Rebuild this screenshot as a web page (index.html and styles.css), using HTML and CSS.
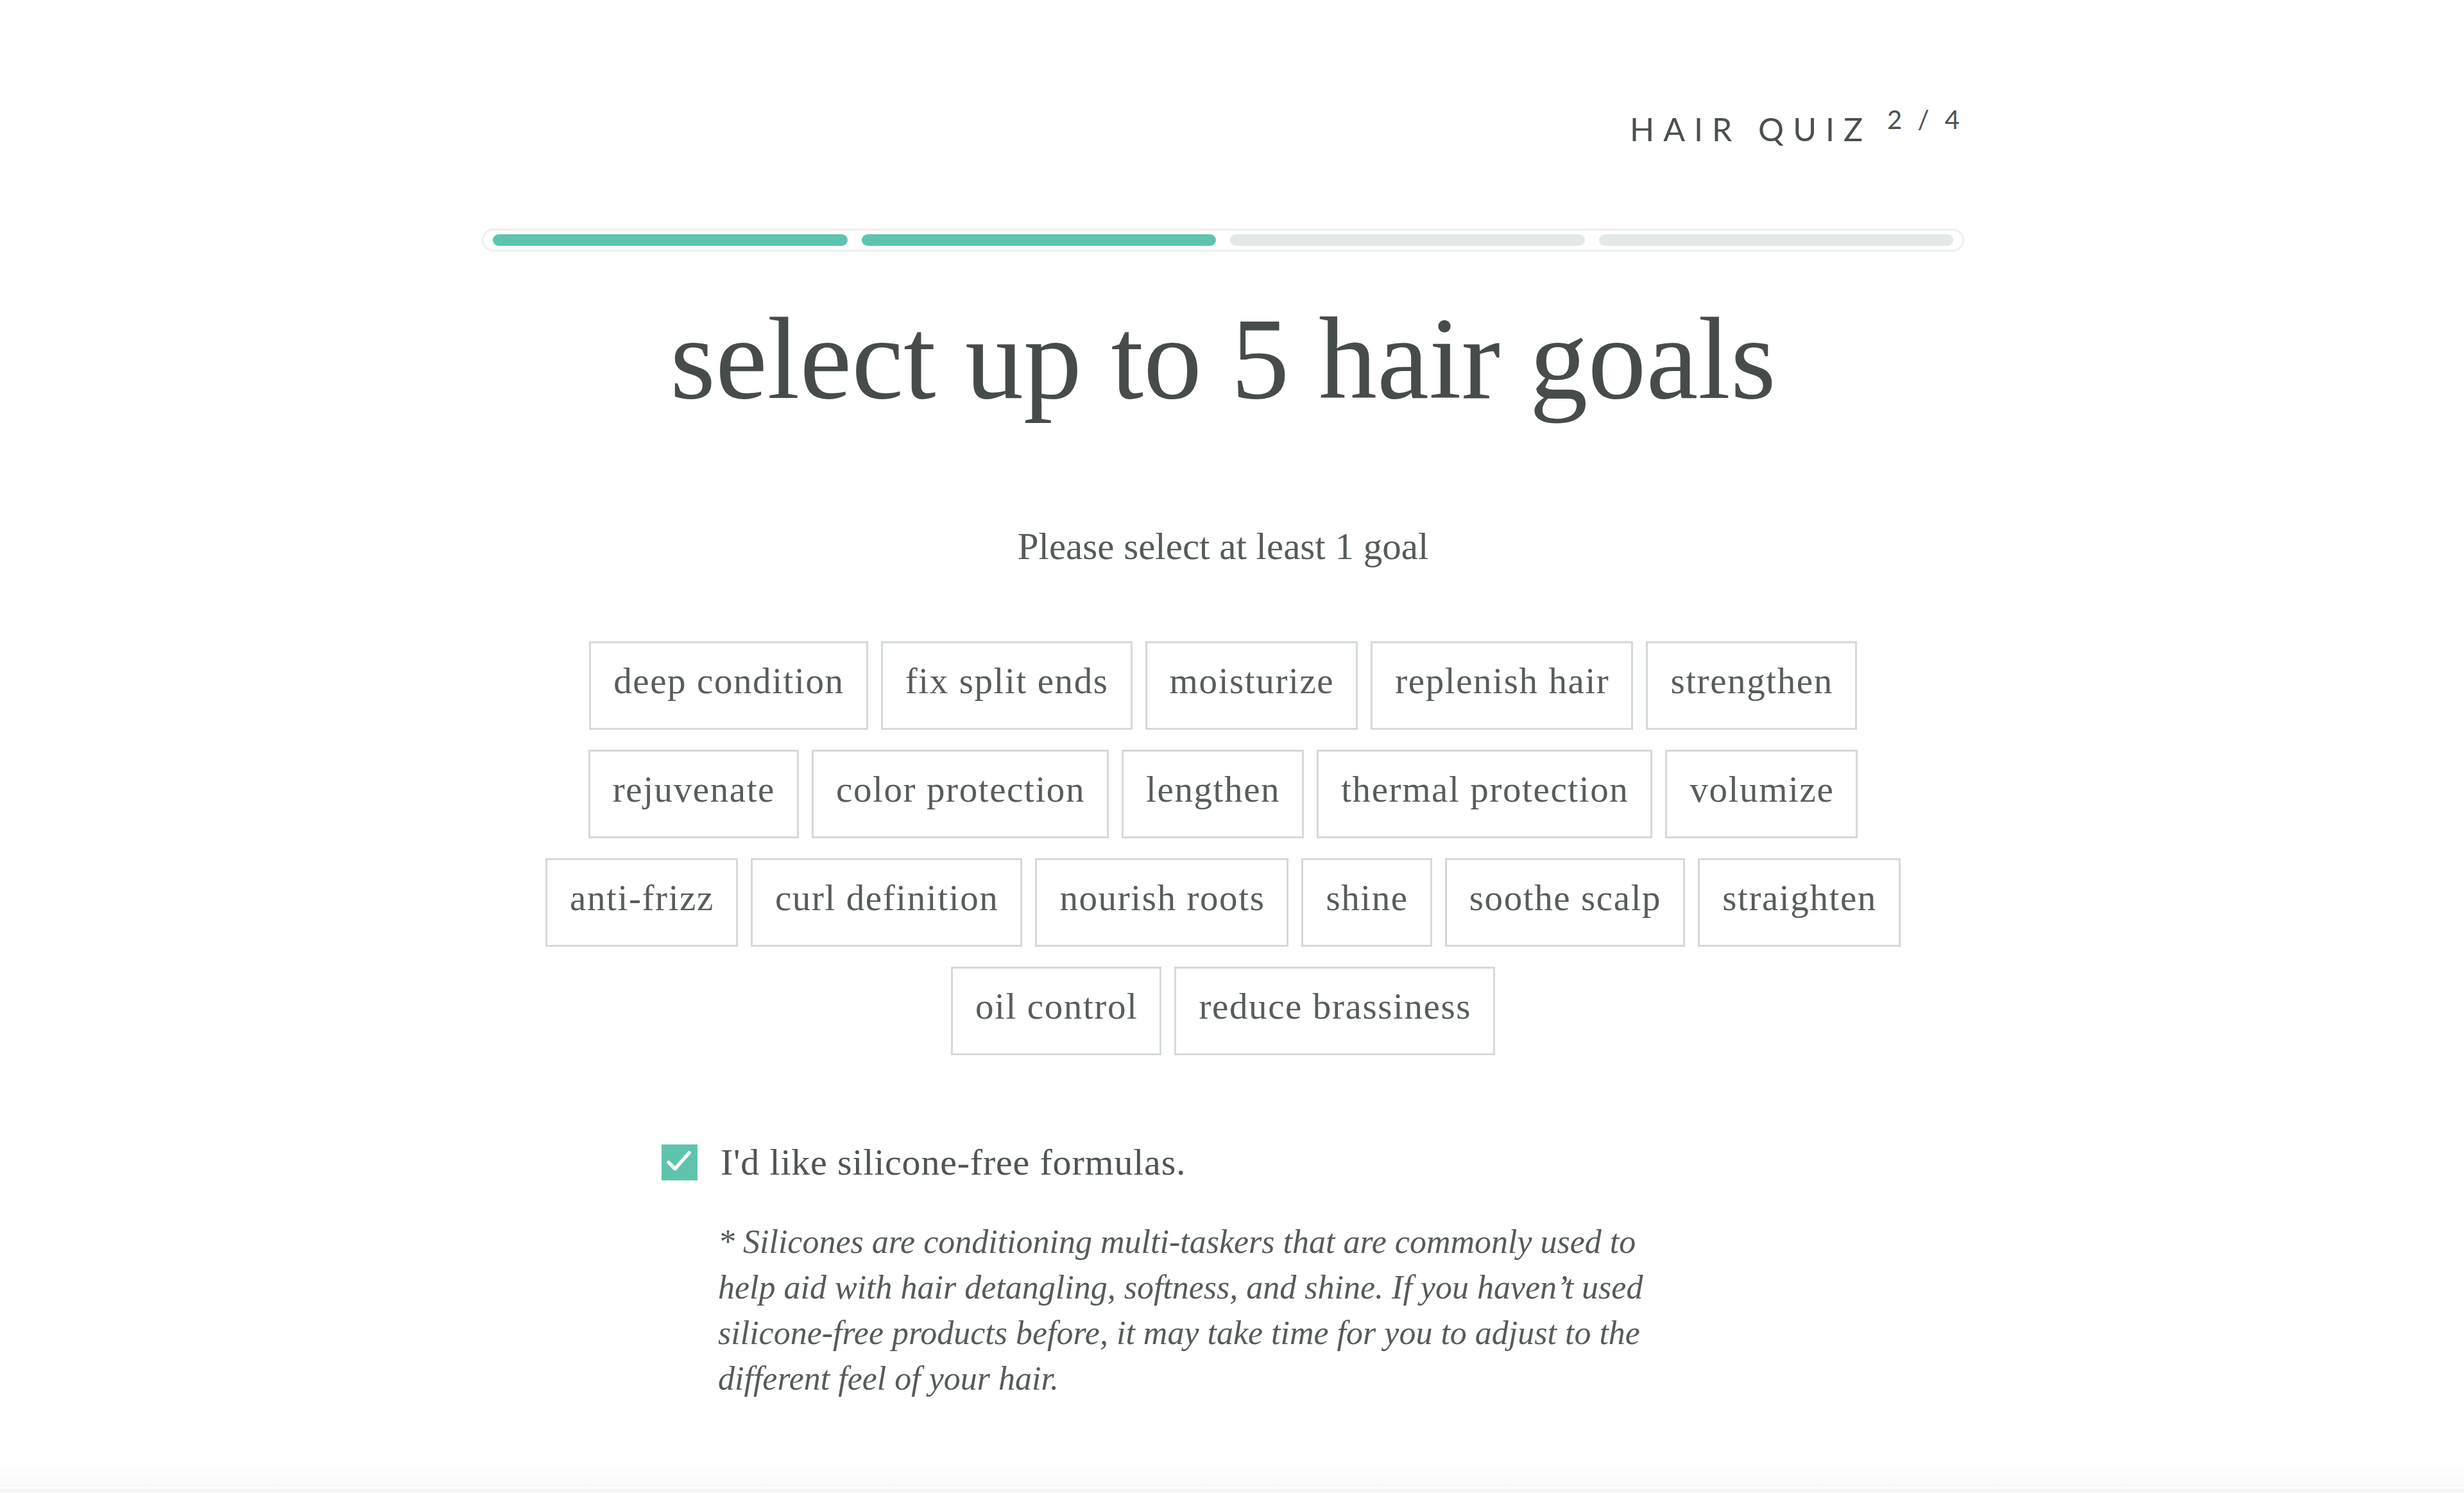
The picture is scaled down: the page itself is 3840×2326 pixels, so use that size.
FILE: index.html
```html
<!DOCTYPE html>
<html lang="en">
<head>
<meta charset="utf-8">
<title>Hair Quiz</title>
<link rel="stylesheet" href="styles.css">
</head>
<body>
<div class="page">
  <main class="quiz">
    <header class="quiz-header">
      <span class="quiz-title">HAIR QUIZ</span>
      <span class="quiz-step">2 / 4</span>
    </header>

    <div class="progress">
      <span class="seg done"></span>
      <span class="seg done"></span>
      <span class="seg"></span>
      <span class="seg"></span>
    </div>

    <h1 class="title">select up to 5 hair goals</h1>
    <p class="hint">Please select at least 1 goal</p>

    <div class="chips">
      <div class="chip-row">
        <button class="chip">deep condition</button>
        <button class="chip">fix split ends</button>
        <button class="chip">moisturize</button>
        <button class="chip">replenish hair</button>
        <button class="chip">strengthen</button>
      </div>
      <div class="chip-row">
        <button class="chip">rejuvenate</button>
        <button class="chip">color protection</button>
        <button class="chip">lengthen</button>
        <button class="chip">thermal protection</button>
        <button class="chip">volumize</button>
      </div>
      <div class="chip-row">
        <button class="chip">anti-frizz</button>
        <button class="chip">curl definition</button>
        <button class="chip">nourish roots</button>
        <button class="chip">shine</button>
        <button class="chip">soothe scalp</button>
        <button class="chip">straighten</button>
      </div>
      <div class="chip-row">
        <button class="chip">oil control</button>
        <button class="chip">reduce brassiness</button>
      </div>
    </div>

    <section class="silicone">
      <div class="check-row">
        <span class="checkbox">
          <svg viewBox="0 0 56 56" width="56" height="56" aria-hidden="true">
            <polyline points="11,28 21,38 43,13" fill="none" stroke="#ffffff" stroke-width="5.5" stroke-linecap="round" stroke-linejoin="round"/>
          </svg>
        </span>
        <span class="check-label">I'd like silicone-free formulas.</span>
      </div>
      <p class="note">* Silicones are conditioning multi-taskers that are commonly used to help aid with hair detangling, softness, and shine. If you haven’t used silicone-free products before, it may take time for you to adjust to the different feel of your hair.</p>
    </section>
  </main>
  <div class="footer"></div>
</div>
</body>
</html>
```

FILE: styles.css
```css
html, body {
  margin: 0;
  padding: 0;
  background: #ffffff;
}

body {
  font-family: "Liberation Serif", "Times New Roman", serif;
  color: #4d5352;
}

.page {
  min-height: 100vh;
  display: flex;
  flex-direction: column;
}

.quiz {
  display: flex;
  flex-direction: column;
  align-items: center;
  padding-right: 28px;
}

/* header */
.quiz-header {
  width: 2310px;
  margin-top: 171px;
  display: flex;
  justify-content: flex-end;
  align-items: baseline;
  line-height: 60px;
  font-family: Lato, "Open Sans", sans-serif;
  color: #4a504f;
}

.quiz-title {
  font-size: 50px;
  letter-spacing: 14px;
}

.quiz-step {
  font-size: 40px;
  letter-spacing: 7px;
  margin-left: 24px;
  position: relative;
  top: -19px;
}

/* progress */
.progress {
  width: 2310px;
  box-sizing: border-box;
  height: 36px;
  margin-top: 121px;
  border: 3px solid #edf0ef;
  border-radius: 18px;
  padding: 6px 14px;
  display: flex;
  gap: 22px;
}

.seg {
  flex: 1;
  border-radius: 9px;
  background: #e4e8e7;
}

.seg.done {
  background: #5ec4ae;
}

/* headings */
.title {
  margin: 76px 0 0;
  font-size: 182px;
  line-height: 182px;
  font-weight: 400;
  color: #464c4b;
}

.hint {
  margin: 172px 0 0;
  font-size: 59px;
  line-height: 59px;
  color: #555b5a;
}

/* chips */
.chips {
  margin-top: 118px;
  display: flex;
  flex-direction: column;
  align-items: center;
  gap: 31px;
}

.chip-row {
  display: flex;
  gap: 20px;
}

.chip {
  height: 138px;
  box-sizing: border-box;
  border: 3px solid #d4dada;
  border-radius: 0;
  background: #ffffff;
  padding: 0 34px 15px 35px;
  margin: 0;
  font-family: inherit;
  font-size: 57px;
  line-height: 57px;
  letter-spacing: 1.6px;
  color: #575d5c;
  cursor: pointer;
}

/* silicone */
.silicone {
  width: 1750px;
  margin-top: 139px;
}

.check-row {
  display: flex;
  align-items: center;
  gap: 36px;
}

.checkbox {
  width: 56px;
  height: 56px;
  background: #5ec4ae;
  display: flex;
  flex: none;
}

.check-label {
  font-size: 58px;
  line-height: 56px;
  letter-spacing: 0.8px;
  color: #4f5554;
}

.note {
  margin: 60px 0 0 88px;
  width: 1500px;
  font-style: italic;
  font-size: 52px;
  line-height: 71px;
  color: #555b5a;
}

.footer {
  margin-top: auto;
  height: 43px;
  background: linear-gradient(to bottom, #fefefe 0, #f9f9f9 34px, #ffffff 34px, #ffffff 36px, #f5f5f5 36px);
}
```
